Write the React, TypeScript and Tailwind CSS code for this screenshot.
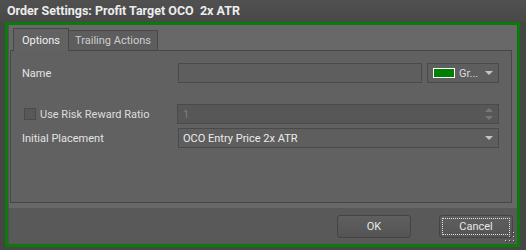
import React from 'react';

const font = { fontFamily: 'Roboto, "Liberation Sans", sans-serif' };

function Arrow({ color = '#c4c4c4' }: { color?: string }) {
  return (
    <svg width="8" height="4" viewBox="0 0 8 4" className="shrink-0">
      <path d="M0 0 H8 L4 4 Z" fill={color} />
    </svg>
  );
}

function SizeGrip() {
  // classic 3-2-1 dot triangle
  const dots = [
    [8, 0],
    [4, 4], [8, 4],
    [0, 8], [4, 8], [8, 8],
  ];
  return (
    <svg width="11" height="11" viewBox="0 0 11 11">
      {dots.map(([x, y], i) => (
        <g key={i}>
          <rect x={x + 1} y={y + 1} width="1" height="1" fill="#3a3a3a" />
          <rect x={x} y={y} width="1" height="1" fill="#d8d8d8" />
        </g>
      ))}
    </svg>
  );
}

export default function App() {
  return (
    <div
      className="w-[526px] h-[250px] bg-[#454545] flex flex-col overflow-hidden text-[11px] text-[#e4e4e4]"
      style={font}
    >
      {/* Title bar */}
      <div className="h-[22px] pl-[7px] flex items-center bg-gradient-to-b from-[#505050] to-[#484848]">
        <span className="font-bold text-[12.5px] text-[#ececec] whitespace-pre">
          Order Settings: Profit Target OCO  2x ATR
        </span>
      </div>

      {/* Green frame */}
      <div className="ml-[5px] mr-[6px] h-[225px] border-[3px] border-[#0b7a0b] flex flex-col bg-[#686868]">
        <div className="flex-1 flex flex-col border-l border-[#555] pl-[1px] pr-[5px] pt-[3px]">
          {/* Tabs */}
          <div className="flex items-end pl-[3px] h-[22px]">
            <div className="relative z-10 h-[23px] w-[56px] -mb-[1px] pt-[2px] flex items-center justify-center border border-b-0 border-[#474747] bg-[#626262] text-[#f0f0f0]">
              Options
            </div>
            <div className="h-[20px] w-[89px] pt-[2px] flex items-center justify-center border border-l-0 border-b-0 border-[#474747] bg-[#5d5d5d] text-[#cdcdcd]">
              Trailing Actions
            </div>
          </div>

          {/* Tab panel */}
          <div className="h-[153px] border border-[#474747] bg-[#616161] pt-[12px] pl-[11px] pr-[12px]">
            <div className="flex items-center h-[20px]">
              <div className="w-[156px] pt-[2px]">Name</div>
              <div className="w-[244px] h-[20px] border border-[#4a4a4a] bg-[#5e5e5e]" />
              <div className="ml-[5px] w-[72px] h-[20px] border border-[#4a4a4a] bg-[#5e5e5e] flex items-center pl-[5px] pr-[5px]">
                <div className="w-[22px] h-[10px] border border-white bg-[#008000]" />
                <span className="ml-[4px] pt-[2px] flex-1 text-[#dcdcdc]">Gr...</span>
                <Arrow />
              </div>
            </div>

            <div className="flex items-center h-[20px] mt-[21px]">
              <div className="w-[155px] flex items-center pl-[2px]">
                <div className="w-[12px] h-[12px] border border-[#4a4a4a] bg-[#595959]" />
                <span className="ml-[4px] pt-[2px] text-[#dedede]">Use Risk Reward Ratio</span>
              </div>
              <div className="w-[322px] h-[20px] border border-[#4a4a4a] bg-[#575757] flex items-center pl-[5px] pr-[5px] text-[#7c7c7c]">
                <span className="flex-1 pt-[2px]">1</span>
                <div className="flex flex-col gap-[4px]">
                  <svg width="8" height="4" viewBox="0 0 8 4"><path d="M0 4 H8 L4 0 Z" fill="#777" /></svg>
                  <svg width="8" height="4" viewBox="0 0 8 4"><path d="M0 0 H8 L4 4 Z" fill="#777" /></svg>
                </div>
              </div>
            </div>

            <div className="flex items-center h-[20px] mt-[4px]">
              <div className="w-[156px] pt-[2px]">Initial Placement</div>
              <div className="w-[321px] h-[20px] border border-[#4a4a4a] bg-[#5e5e5e] flex items-center pl-[4px] pr-[5px]">
                <span className="flex-1 pt-[2px] text-[#ececec]">OCO Entry Price 2x ATR</span>
                <Arrow />
              </div>
            </div>
          </div>

          <div className="h-[5px]" />
        </div>

        {/* Buttons */}
        <div className="h-[36px] shrink-0 bg-[#595959] border-l border-[#505050] flex items-start pt-[7px] relative">
          <div className="ml-[328px] w-[74px] h-[23px] pt-[2px] rounded-[3px] border border-[#444] bg-gradient-to-b from-[#5f5f5f] to-[#545454] flex items-center justify-center text-[#e8e8e8]">
            OK
          </div>
          <div className="ml-[28px] w-[74px] h-[23px] rounded-[3px] border border-[#444] bg-gradient-to-b from-[#5f5f5f] to-[#545454] p-[2px]">
            <div className="w-full h-full pt-[2px] border border-dotted border-[#e0e0e0] flex items-center justify-center text-[#e8e8e8]">
              Cancel
            </div>
          </div>
          <div className="absolute right-[1px] bottom-[1px]">
            <SizeGrip />
          </div>
        </div>
      </div>
    </div>
  );
}
